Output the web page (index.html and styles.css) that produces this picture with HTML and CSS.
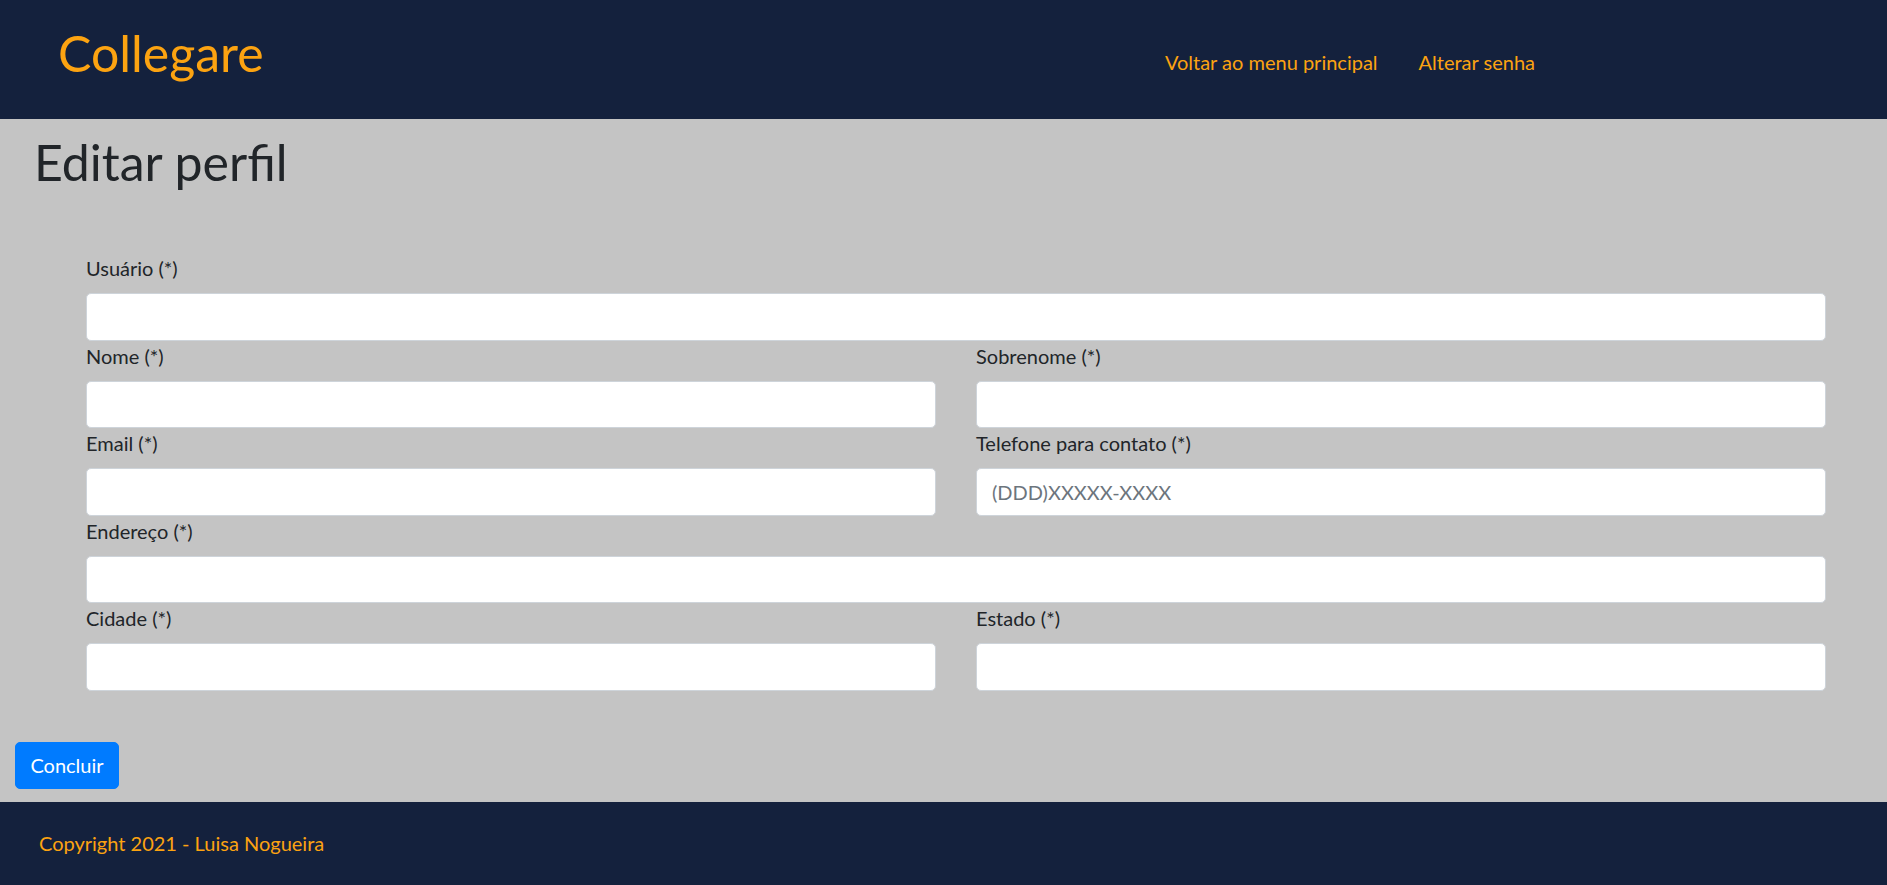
FILE: index.html
```html
<!DOCTYPE html>
<html lang="pt-BR">
<head>
<meta charset="utf-8">
<title>Collegare - Editar perfil</title>
<link rel="stylesheet" href="styles.css">
</head>
<body>
<header class="topbar">
  <a class="brand" href="#">Collegare</a>
  <nav class="nav">
    <a class="nav-link" href="#">Voltar ao menu principal</a>
    <a class="nav-link" href="#">Alterar senha</a>
  </nav>
</header>
<main class="content">
  <h1 class="title">Editar perfil</h1>
  <form class="form">
    <div class="field wide">
      <label class="label">Usuário (*)</label>
      <input class="input" type="text">
    </div>
    <div class="field">
      <label class="label">Nome (*)</label>
      <input class="input" type="text">
    </div>
    <div class="field">
      <label class="label">Sobrenome (*)</label>
      <input class="input" type="text">
    </div>
    <div class="field">
      <label class="label">Email (*)</label>
      <input class="input" type="email">
    </div>
    <div class="field">
      <label class="label">Telefone para contato (*)</label>
      <input class="input" type="text" placeholder="(DDD)XXXXX-XXXX">
    </div>
    <div class="field wide">
      <label class="label">Endereço (*)</label>
      <input class="input" type="text">
    </div>
    <div class="field">
      <label class="label">Cidade (*)</label>
      <input class="input" type="text">
    </div>
    <div class="field">
      <label class="label">Estado (*)</label>
      <input class="input" type="text">
    </div>
  </form>
  <button class="btn" type="button">Concluir</button>
</main>
<footer class="footer">
  <span class="copy">Copyright 2021 - Luisa Nogueira</span>
</footer>
</body>
</html>
```
FILE: styles.css
```css
* { box-sizing: border-box; }
html, body { margin: 0; padding: 0; }
body {
  font-family: Lato, "Open Sans", sans-serif;
  font-size: 20px;
  line-height: 30px;
  color: #212529;
  background: #c4c4c4;
}
.topbar {
  height: 119px;
  background: #14213d;
  display: flex;
  align-items: flex-start;
  padding: 23px 0 0 58px;
}
.brand {
  font-size: 50px;
  line-height: 60px;
  color: #fca311;
  text-decoration: none;
}
.nav {
  display: flex;
  gap: 41px;
  margin-left: auto;
  margin-right: 352px;
  margin-top: 24px;
}
.nav-link {
  color: #fca311;
  text-decoration: none;
  font-size: 20px;
  line-height: 30px;
}
.content {
  height: 683px;
  padding: 13px 0 0 0;
}
.title {
  margin: 0 0 0 34px;
  font-size: 50px;
  line-height: 60px;
  font-weight: 400;
}
.form {
  margin: 61px 61px 0 86px;
  display: grid;
  grid-template-columns: 1fr 1fr;
  column-gap: 40px;
}
.field { display: flex; flex-direction: column; }
.field.wide { grid-column: 1 / span 2; }
.label {
  margin-bottom: 10px;
  line-height: 30px;
}
.input {
  height: 47.5px;
  border: 1px solid #ced4da;
  border-radius: 5px;
  background: #fff;
  font: inherit;
  padding: 7px 15px;
  color: #495057;
}
.input::placeholder { color: #6c757d; }
.btn {
  display: block;
  margin: 51px 0 0 15px;
  height: 47px;
  width: 104px;
  padding: 0;
  border: 1px solid #007bff;
  border-radius: 5px;
  background: #007bff;
  color: #fff;
  font: inherit;
}
.footer {
  height: 83px;
  background: #14213d;
  padding: 26px 0 0 39px;
}
.copy { color: #fca311; }
```
